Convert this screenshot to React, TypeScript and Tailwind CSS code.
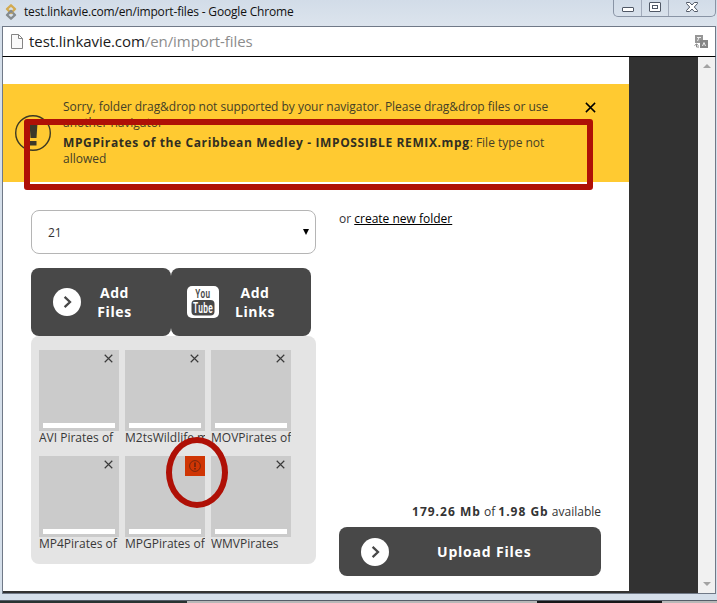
import React from "react";

const sans = "font-['Open_Sans','Noto_Sans',sans-serif]";

function Cross({ className }: { className: string }) {
  return (
    <svg viewBox="0 0 10 10" className={className} fill="none" stroke="currentColor" strokeWidth="1.3">
      <path d="M0.8 0.8 9.2 9.2M9.2 0.8 0.8 9.2" />
    </svg>
  );
}

function ArrowDisc() {
  return (
    <svg viewBox="0 0 28 28" className="size-7 shrink-0" fill="none">
      <circle cx="14" cy="14" r="14" fill="#fff" />
      <path d="m11.6 8.8 5.4 5.2-5.4 5.2" stroke="#484848" strokeWidth="2.3" />
    </svg>
  );
}

function YouTube() {
  return (
    <svg viewBox="0 0 32 32" className="size-8 shrink-0">
      <rect width="32" height="32" rx="5" fill="#fff" />
      <rect x="4.5" y="14" width="23" height="15.5" rx="4" fill="#484848" />
      <g fontFamily="Roboto, sans-serif" fontWeight="600" textAnchor="middle">
        <text x="15.8" y="12.3" fontSize="13.5" textLength="15" lengthAdjust="spacingAndGlyphs" fill="#484848">You</text>
        <text x="16" y="27" fontSize="14" textLength="20" lengthAdjust="spacingAndGlyphs" fill="#fff">Tube</text>
      </g>
    </svg>
  );
}

function Tile({ name, error }: { name: string; error?: boolean }) {
  return (
    <div className="h-[106px] w-20">
      <div className="flex h-[81px] flex-col items-end justify-between bg-[#cbcbcb]">
        {error ? (
          <div className="flex size-5 items-center justify-center bg-[#cf3504] text-[#6d250e]">
            <svg viewBox="0 0 12 12" className="size-3" fill="none" stroke="currentColor">
              <circle cx="6" cy="6" r="5.4" strokeWidth=".9" />
              <path d="M6 2.5v4.500M6 8v1.500" strokeWidth="1.6" />
            </svg>
          </div>
        ) : (
          <Cross className="mt-1 mr-[6px] size-[9px] text-[#3a3a3a]" />
        )}
        <div className="mb-[3px] h-[5px] w-full border-x-4 border-[#cbcbcb] bg-white" />
      </div>
      <div className="h-5 overflow-hidden text-[12px] leading-[14px] whitespace-nowrap text-[#383838]">{name}</div>
    </div>
  );
}

export default function App() {
  return (
    <div className={`relative flex h-[603px] w-[717px] flex-col overflow-hidden bg-[#d5dfea] ${sans}`}>
      <header className="flex h-[26px] shrink-0 justify-between bg-linear-to-b from-[#d2dce8] to-[#dce4ed]">
        <div className="flex h-6 items-center pl-[5px]">
          <svg viewBox="0 0 12 16" className="h-4 w-3" fill="none" strokeWidth="2.3" strokeLinejoin="round">
            <path d="m6 7 4 4-4 3.700L2 11z" stroke="#858b8e" />
            <path d="m6 1.300 4 3.700-4 4-4-4z" stroke="#d3aa50" />
            <path d="m3.500 9.500 2.500-2.500 1.500 1.500" stroke="#858b8e" />
          </svg>
          <span className="ml-[7px] text-[12px] tracking-[-0.18px] whitespace-nowrap text-[#111]">test.linkavie.com/en/import-files - Google Chrome</span>
        </div>
        <div className="mr-px flex h-[17px] w-[103px] rounded-b-[5px] border border-t-0 border-[#8994a5] text-[#505866]">
          <div className="flex w-7 items-start justify-center border-r border-[#a2abbb] pt-[7px]">
            <div className="h-[5px] w-3 rounded-[1px] border border-current bg-white" />
          </div>
          <div className="flex w-[27px] items-start justify-center border-r border-[#a2abbb] pt-[2px]">
            <div className="flex h-[10px] w-3 items-center justify-center rounded-[1px] border border-current bg-white">
              <div className="h-1 w-[6px] border border-current" />
            </div>
          </div>
          <div className="flex flex-1 justify-center pt-[2px]">
            <svg viewBox="0 0 12 10" className="h-[10px] w-3" fill="#fff" stroke="currentColor">
              <path d="M.5.5h3.2L6 3 8.300.5h3.200v1L8.300 5l3.200 3.500v1H8.300L6 7 3.700 9.500H.5v-1L3.700 5 .5 1.500z" />
            </svg>
          </div>
        </div>
      </header>

      <div className="mr-px ml-[2px] flex h-[31px] shrink-0 items-center border-t border-r border-b border-l border-t-[#707987] border-r-[#707987] border-b-black border-l-[#707987] bg-white">
        <svg viewBox="0 0 12 15" className="ml-2 h-[15px] w-3" fill="#fafafa" stroke="#858585">
          <path d="M.5.5h7l4 4v10H.5zM7.500.5v4h4" />
        </svg>
        <span className="ml-[6px] text-[15px] tracking-[-0.07px] text-[#1b1b1b]">test.linkavie.com<span className="text-[#8c8c8c]">/en/import-files</span></span>
        <svg viewBox="0 0 14 14" className="mr-[7px] ml-auto size-[14px]">
          <path d="M1 0h8v5H6v3H1z" fill="#969696" />
          <path d="M6 5h8v8H6z" fill="#858585" />
          <path d="M3 2.500h4M5 2.500 3.500 6M8.500 11 10 7.500l1.500 3.500" fill="none" stroke="#eee" />
          <path d="M2.500 9v3H5M.5 10.500l2-1.500 2 1.500" fill="none" stroke="#888" />
        </svg>
      </div>

      <div className="mr-px ml-[2px] flex h-[537px] shrink-0 border-x border-b border-[#707987] bg-[#323232]">
        <main className="h-[534px] w-[626px] bg-white pt-[27px]">
          <section className="flex h-[98px] bg-[#ffca31] text-[12px] leading-4 text-[#444027]">
            <svg viewBox="0 0 36 36" className="mt-[31px] ml-3 size-9 shrink-0" fill="none">
              <circle cx="18" cy="18" r="17.300" stroke="#3c3923" strokeWidth="1.400" />
              <path d="M14.500 8h8l-1 15h-6zM15 26h6.500v4.500H15z" fill="#3b3929" />
            </svg>
            <div className="ml-3 w-[515px] pt-[15px] whitespace-nowrap">
              <p className="h-9 tracking-[-0.03px]">Sorry, folder drag&amp;drop not supported by your navigator. Please drag&amp;drop files or use<br />another navigator</p>
              <p><b className="tracking-[0.62px] text-[#302e22]">MPGPirates of the Caribbean Medley - IMPOSSIBLE REMIX.mpg</b>: File type not<br />allowed</p>
            </div>
            <Cross className="mt-[18px] ml-[7px] size-[11px] text-black" />
          </section>
          <div className="flex pt-7 pl-7">
            <div className="w-[285px] shrink-0">
              <div className="flex h-11 items-center justify-between rounded-lg border border-[#b5b5b5] pr-[6px] pl-4 text-[12px] text-[#333]">
                <span className="pt-[2px]">21</span>
                <svg viewBox="0 0 6 6" className="size-[6px]"><path d="M0 0h6L3 6z" /></svg>
              </div>
              <div className="mt-[14px] flex text-center text-[14px] leading-[19px] font-bold tracking-[0.6px] text-white">
                <button className="flex h-[68px] w-[140px] items-center rounded-lg bg-[#484848] pl-[22px]">
                  <ArrowDisc /><span className="ml-[15px] w-[37px]">Add<br />Files</span>
                </button>
                <button className="flex h-[68px] w-[140px] items-center rounded-lg bg-[#484848] pl-4">
                  <YouTube /><span className="ml-[15px] w-[42px]">Add<br />Links</span>
                </button>
              </div>
              <div className="grid h-[228px] grid-cols-[80px_80px_80px] content-start gap-x-[6px] rounded-lg bg-[#e4e4e4] pt-[14px] pl-2">
                <Tile name="AVI Pirates of" />
                <Tile name="M2tsWildlife.m" />
                <Tile name="MOVPirates of" />
                <Tile name="MP4Pirates of" />
                <Tile name="MPGPirates of" error />
                <Tile name="WMVPirates" />
              </div>
            </div>
            <div className="ml-[23px] flex h-[366px] w-[262px] flex-col pt-px text-[12px] leading-4 text-[#333]">
              <p>or <a className="text-black underline">create new folder</a></p>
              <p className="mt-auto mb-[7px] text-right whitespace-nowrap"><b className="tracking-[1px]">179.26 Mb</b> of <b className="tracking-[1px]">1.98 Gb</b> available</p>
              <button className="flex h-[49px] shrink-0 items-center rounded-lg bg-[#484848] pl-[22px] text-[14px] font-bold tracking-[0.8px] text-white">
                <ArrowDisc /><span className="ml-12">Upload Files</span>
              </button>
            </div>
          </div>
        </main>
        <aside className="ml-auto flex w-[17px] flex-col items-center justify-between bg-[#f1f1f1] pt-[7px] pb-[7px]">
          <svg viewBox="0 0 8 4" className="h-1 w-2" fill="#a3a3a3"><path d="m0 4 4-4 4 4z" /></svg>
          <svg viewBox="0 0 8 4" className="h-1 w-2" fill="#a3a3a3"><path d="m0 0 4 4 4-4z" /></svg>
        </aside>
      </div>
      <footer className="mt-auto flex h-[3px] shrink-0 border-t border-[#555d68] bg-[#b8b8b8]">
        <div className="w-[187px] bg-[#293331]" />
        <div className="ml-[350px] w-[125px] bg-[#171719]" />
      </footer>

      <div className="absolute top-[119px] left-6 h-[71px] w-[569px] rounded-[3px] border-6 border-[#af1006]" />
      <div className="absolute top-[437px] left-[166px] h-[71px] w-[62px] rounded-[50%] border-6 border-[#af1006]" />
    </div>
  );
}
